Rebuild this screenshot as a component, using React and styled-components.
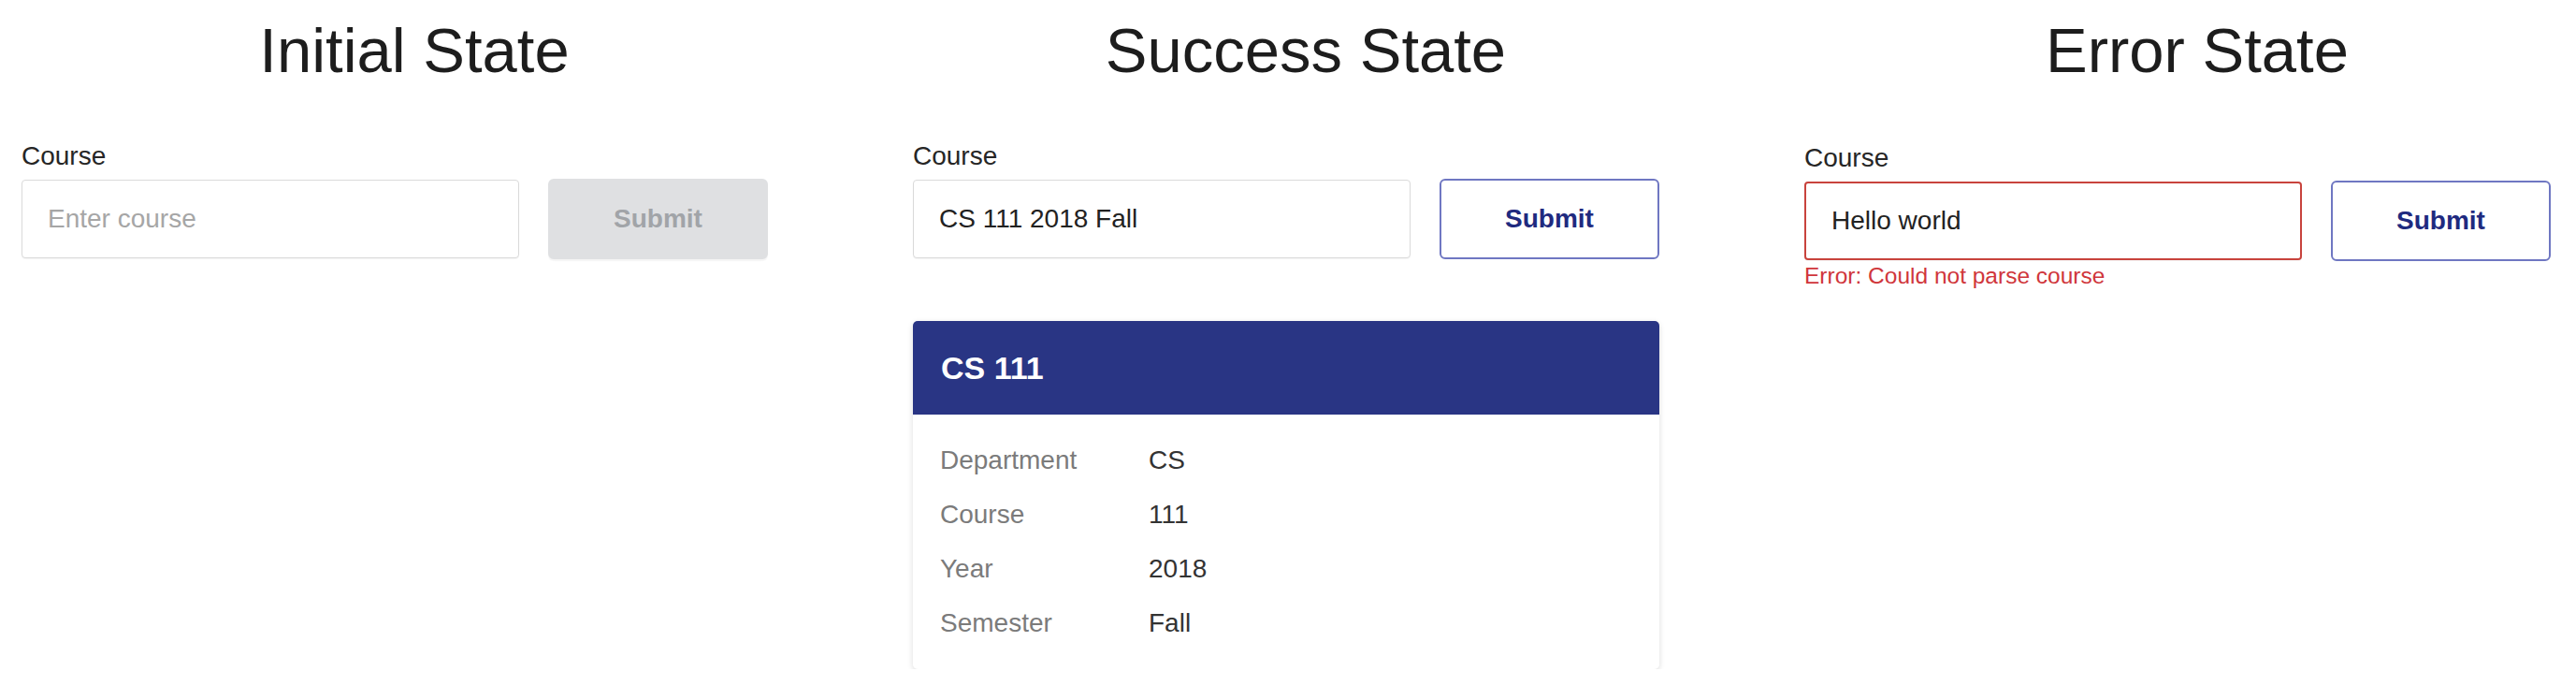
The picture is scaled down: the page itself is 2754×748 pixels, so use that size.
import React from "react";
import styled, { createGlobalStyle } from "styled-components";

const GlobalStyle = createGlobalStyle`
  html, body {
    margin: 0;
    padding: 0;
    background: #fff;
    overflow: hidden;
  }

  body {
    font-family: "Liberation Sans", Arial, Helvetica, sans-serif;
    color: #222;
  }
`;

const course = {
  name: "CS 111",
  rows: [
    { label: "Department", value: "CS" },
    { label: "Course", value: "111" },
    { label: "Year", value: "2018" },
    { label: "Semester", value: "Fall" }
  ]
};

export default function App() {
  return (
    <>
      <GlobalStyle />
      <Page>
        <Column>
          <Title>Initial State</Title>
          <CourseForm placeholder="Enter course" disabled />
        </Column>

        <Column>
          <Title>Success State</Title>
          <CourseForm value="CS 111 2018 Fall" />
          <CourseCard course={course} />
        </Column>

        <Column>
          <Title>Error State</Title>
          <CourseForm
            value="Hello world"
            error="Error: Could not parse course"
            shift
          />
        </Column>
      </Page>
    </>
  );
}

function CourseForm({ value, placeholder, disabled, error, shift }) {
  return (
    <Form $shift={shift} onSubmit={e => e.preventDefault()}>
      <Label htmlFor={`course-${value || "empty"}`}>Course</Label>
      <Row>
        <Field>
          <Input
            id={`course-${value || "empty"}`}
            type="text"
            placeholder={placeholder}
            defaultValue={value}
            $error={!!error}
            readOnly
          />
          {error && <ErrorText>{error}</ErrorText>}
        </Field>
        <Button type="submit" disabled={disabled}>
          Submit
        </Button>
      </Row>
    </Form>
  );
}

function CourseCard({ course }) {
  return (
    <Card>
      <CardHeader>{course.name}</CardHeader>
      <CardBody>
        {course.rows.map(row => (
          <React.Fragment key={row.label}>
            <RowLabel>{row.label}</RowLabel>
            <RowValue>{row.value}</RowValue>
          </React.Fragment>
        ))}
      </CardBody>
    </Card>
  );
}

const Page = styled.div`
  display: grid;
  grid-template-columns: repeat(3, 840px);
  column-gap: 113px;
  padding: 21px 0 0 23px;
  align-items: start;
`;

const Column = styled.section`
  display: flex;
  flex-direction: column;
`;

const Title = styled.h1`
  margin: 0 0 63px;
  font-size: 67px;
  line-height: 66px;
  font-weight: 400;
  text-align: center;
  color: #1d1d1d;
`;

const Form = styled.form`
  width: 798px;
  margin-top: ${props => (props.$shift ? "2px" : "0")};
`;

const Label = styled.label`
  display: block;
  font-size: 28px;
  line-height: 34px;
  color: #262626;
  margin-bottom: 8px;
`;

const Row = styled.div`
  display: flex;
  align-items: flex-start;
  gap: 31px;
`;

const Field = styled.div`
  flex: 0 0 532px;
  display: flex;
  flex-direction: column;
`;

const Input = styled.input`
  box-sizing: border-box;
  width: 100%;
  height: 84px;
  padding: 0 27px;
  margin: 0;
  font-family: inherit;
  font-size: 28px;
  color: #222;
  background: #fff;
  border: ${props => (props.$error ? "2px solid #c8433d" : "1px solid #dadada")};
  border-radius: 4px;
  box-shadow: 0 1px 1px rgba(0, 0, 0, 0.04);
  outline: none;

  &::placeholder {
    color: #a6a6a6;
  }
`;

const ErrorText = styled.div`
  margin-top: 3px;
  font-size: 24.5px;
  line-height: 28px;
  color: #d0363b;
`;

const Button = styled.button`
  box-sizing: border-box;
  flex: 0 0 235px;
  height: 86px;
  margin-top: -1px;
  font-family: inherit;
  font-size: 28px;
  font-weight: 700;
  color: #1f2a7f;
  background: #fff;
  border: 2px solid #6f77c2;
  border-radius: 6px;
  cursor: pointer;

  &:disabled {
    color: #a1a4a8;
    background: #dfe0e2;
    border-color: #dfe0e2;
    box-shadow: 0 2px 1px rgba(0, 0, 0, 0.04);
    cursor: default;
  }
`;

const Card = styled.div`
  width: 798px;
  margin-top: 66px;
  border-radius: 5px;
  overflow: hidden;
  background: #fff;
  box-shadow: 0 2px 6px rgba(0, 0, 0, 0.14);
`;

const CardHeader = styled.div`
  height: 100px;
  display: flex;
  align-items: center;
  padding: 0 30px;
  background: #293584;
  color: #fff;
  font-size: 34px;
  font-weight: 700;
`;

const CardBody = styled.div`
  display: grid;
  grid-template-columns: 223px 1fr;
  grid-auto-rows: 58px;
  align-items: center;
  padding: 20px 29px;
  font-size: 28px;
`;

const RowLabel = styled.div`
  color: #7b7b7b;
`;

const RowValue = styled.div`
  color: #333;
`;
